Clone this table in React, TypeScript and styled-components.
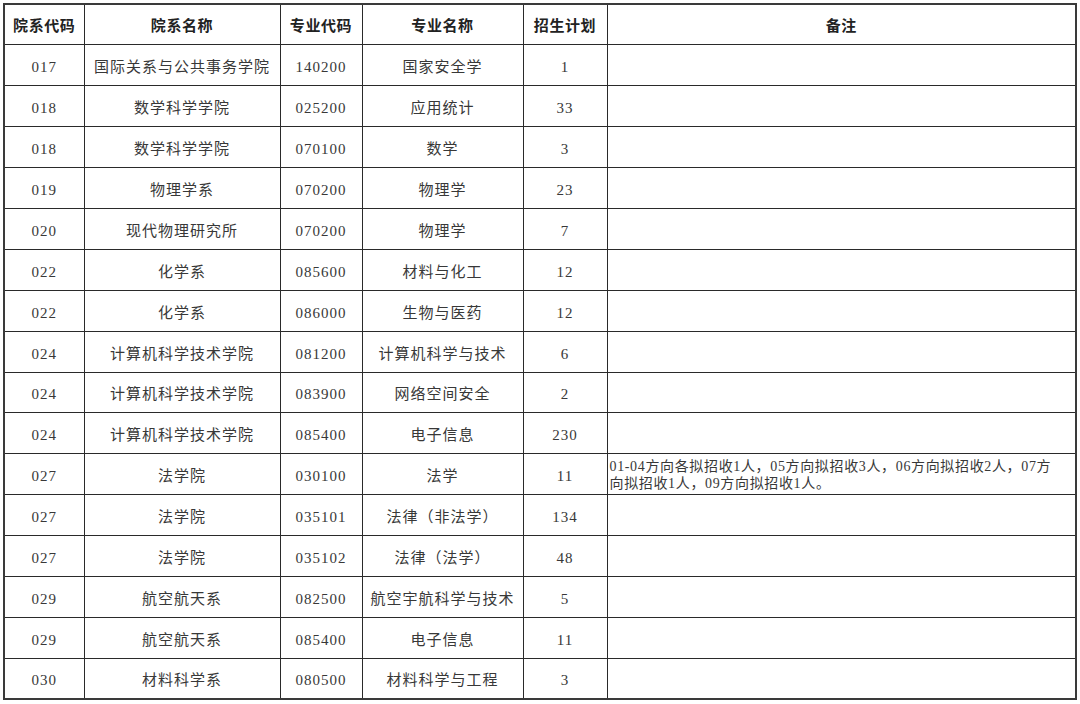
import React from "react";
import styled, { createGlobalStyle } from "styled-components";

const Global = createGlobalStyle`
  html, body { margin: 0; padding: 0; background: #ffffff; }
  body { font-family: "Liberation Serif", "Noto Sans CJK SC", serif; }
`;

const Page = styled.div`
  padding: 3px 0 0 3px;
  width: 1080px;
  height: 704px;
  box-sizing: border-box;
  background: #fff;
`;

const Table = styled.table`
  border-collapse: collapse;
  width: 1072px;
  table-layout: fixed;
  border: 2px solid #3a3a3a;
`;

const Col = styled.col<{ $w: number }>`
  width: ${(p) => p.$w}px;
`;

const Th = styled.th`
  box-sizing: border-box;
  height: 40.9px;
  padding: 0;
  border: 1px solid #2a2a2a;
  font-family: "Noto Sans CJK SC", sans-serif;
  font-weight: 700;
  font-size: 15px;
  letter-spacing: 0.6px;
  color: #222;
  text-align: center;
  vertical-align: middle;
`;

const Td = styled.td<{ $note?: boolean }>`
  box-sizing: border-box;
  height: 40.9px;
  padding: ${(p) => (p.$note ? "2px 2px 0 2px" : "4px 0 0 0")};
  border: 1px solid #2a2a2a;
  font-family: "Liberation Serif", "Noto Sans CJK SC", serif;
  font-size: ${(p) => (p.$note ? "14px" : "15px")};
  line-height: ${(p) => (p.$note ? "17px" : "20px")};
  letter-spacing: ${(p) => (p.$note ? "0.65px" : "1px")};
  color: #383838;
  text-align: ${(p) => (p.$note ? "left" : "center")};
  vertical-align: middle;
  white-space: nowrap;
  overflow: hidden;
`;

const cols = [
  { title: "院系代码", w: 80 },
  { title: "院系名称", w: 196 },
  { title: "专业代码", w: 82 },
  { title: "专业名称", w: 161 },
  { title: "招生计划", w: 84 },
  { title: "备注", w: 469 },
];

const rows: [string, string, string, string, string][] = [
  ["017", "国际关系与公共事务学院", "140200", "国家安全学", "1"],
  ["018", "数学科学学院", "025200", "应用统计", "33"],
  ["018", "数学科学学院", "070100", "数学", "3"],
  ["019", "物理学系", "070200", "物理学", "23"],
  ["020", "现代物理研究所", "070200", "物理学", "7"],
  ["022", "化学系", "085600", "材料与化工", "12"],
  ["022", "化学系", "086000", "生物与医药", "12"],
  ["024", "计算机科学技术学院", "081200", "计算机科学与技术", "6"],
  ["024", "计算机科学技术学院", "083900", "网络空间安全", "2"],
  ["024", "计算机科学技术学院", "085400", "电子信息", "230"],
  ["027", "法学院", "030100", "法学", "11"],
  ["027", "法学院", "035101", "法律（非法学）", "134"],
  ["027", "法学院", "035102", "法律（法学）", "48"],
  ["029", "航空航天系", "082500", "航空宇航科学与技术", "5"],
  ["029", "航空航天系", "085400", "电子信息", "11"],
  ["030", "材料科学系", "080500", "材料科学与工程", "3"],
];

export default function App() {
  return (
    <Page>
      <Global />
      <Table>
        <colgroup>
          {cols.map((c) => (
            <Col key={c.title} $w={c.w} />
          ))}
        </colgroup>
        <thead>
          <tr>
            {cols.map((c) => (
              <Th key={c.title}>{c.title}</Th>
            ))}
          </tr>
        </thead>
        <tbody>
          {rows.map((r, i) => (
            <tr key={i}>
              {r.map((v, j) => (
                <Td key={j}>{v}</Td>
              ))}
              {i === 10 ? (
                <Td $note>
                  01-04方向各拟招收1人，05方向拟招收3人，06方向拟招收2人，07方
                  <br />
                  向拟招收1人，09方向拟招收1人。
                </Td>
              ) : (
                <Td />
              )}
            </tr>
          ))}
        </tbody>
      </Table>
    </Page>
  );
}
